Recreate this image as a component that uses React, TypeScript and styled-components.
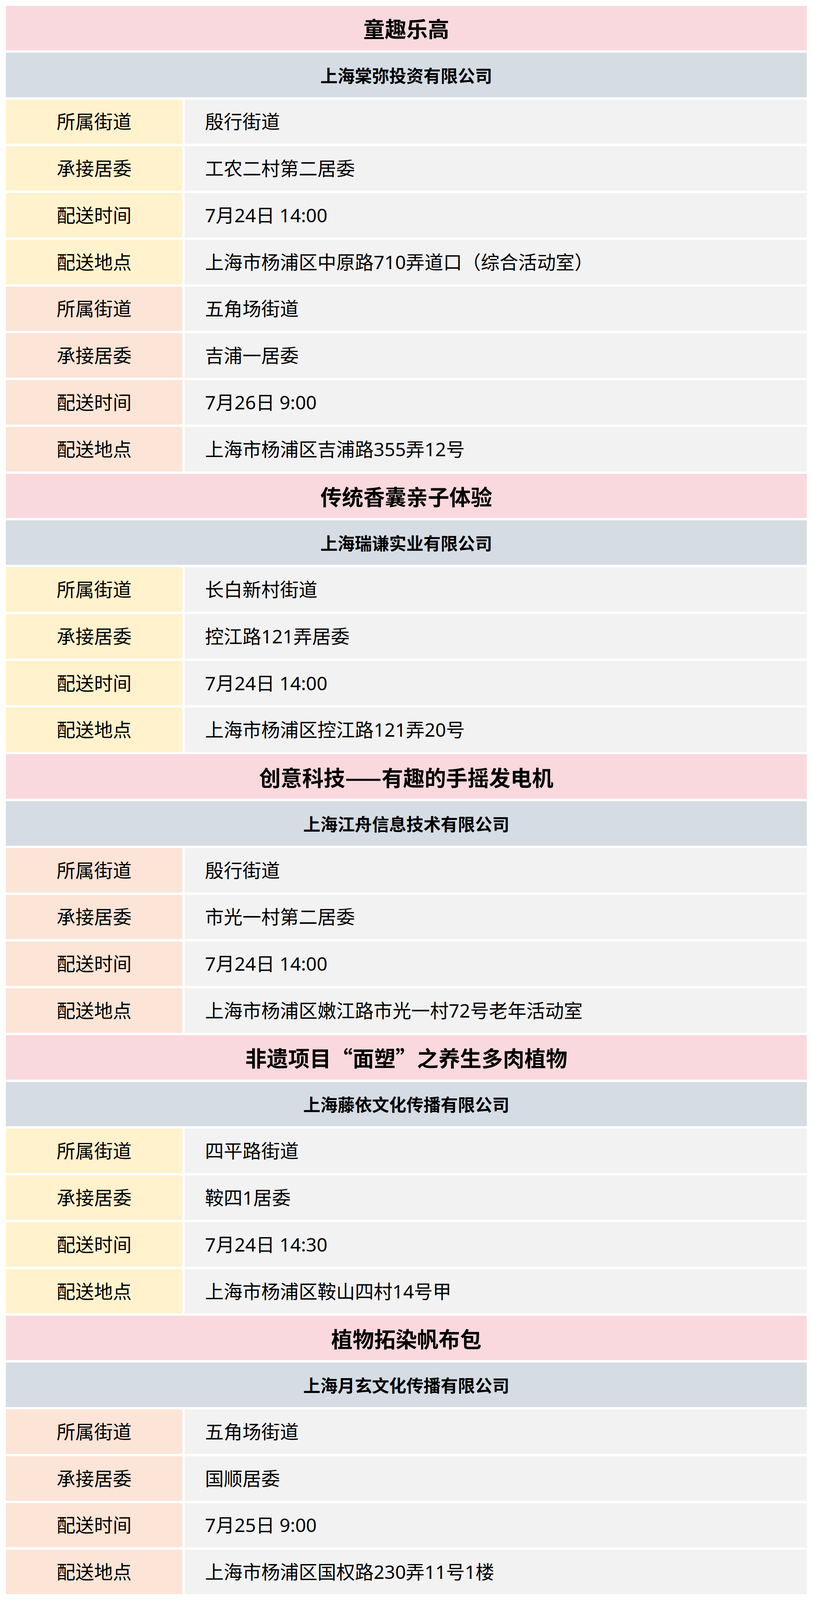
import React from "react";
import styled, { createGlobalStyle } from "styled-components";

const GlobalStyle = createGlobalStyle`
  html, body, #root {
    margin: 0;
    padding: 0;
    height: 100%;
    background: #ffffff;
  }
  body {
    font-family: "Noto Sans", "Noto Sans CJK SC", sans-serif;
    color: #000000;
    overflow: hidden;
  }
  *, *::before, *::after {
    box-sizing: border-box;
  }
`;

const Page = styled.div`
  display: flex;
  flex-direction: column;
  gap: 6px;
  height: 100vh;
  padding: 15px 16px 15px 15px;
  background: #ffffff;
`;

const Band = styled.div`
  flex: 1 1 0;
  min-height: 0;
  display: flex;
  align-items: center;
  justify-content: center;
  font-family: "Noto Sans CJK SC", "Noto Sans", sans-serif;
  font-weight: 700;
  line-height: 1;
  white-space: nowrap;
`;

const TitleBar = styled(Band)`
  background: #f9d9de;
  font-size: 55px;
`;

const CompanyBar = styled(Band)`
  background: #d5dce4;
  font-size: 44px;
`;

const Row = styled.div`
  flex: 1 1 0;
  min-height: 0;
  display: grid;
  grid-template-columns: 452px 1fr;
  column-gap: 6px;
`;

const Label = styled.div<{ $tone: "yellow" | "peach" }>`
  display: flex;
  align-items: center;
  justify-content: center;
  background: ${(p) => (p.$tone === "yellow" ? "#fff2cc" : "#fce4d6")};
  font-size: 48px;
  line-height: 1;
`;

const Value = styled.div`
  display: flex;
  align-items: center;
  padding-left: 52px;
  background: #f2f2f2;
  font-size: 48px;
  line-height: 1;
  white-space: nowrap;
`;

type Tone = "yellow" | "peach";
type Site = { street: string; committee: string; time: string; place: string; tone: Tone };
type Section = { title: string; company: string; sites: Site[] };

const sections: Section[] = [
  {
    title: "童趣乐高",
    company: "上海棠弥投资有限公司",
    sites: [
      {
        street: "殷行街道",
        committee: "工农二村第二居委",
        time: "7月24日 14:00",
        place: "上海市杨浦区中原路710弄道口（综合活动室）",
        tone: "yellow",
      },
      {
        street: "五角场街道",
        committee: "吉浦一居委",
        time: "7月26日 9:00",
        place: "上海市杨浦区吉浦路355弄12号",
        tone: "peach",
      },
    ],
  },
  {
    title: "传统香囊亲子体验",
    company: "上海瑞谦实业有限公司",
    sites: [
      {
        street: "长白新村街道",
        committee: "控江路121弄居委",
        time: "7月24日 14:00",
        place: "上海市杨浦区控江路121弄20号",
        tone: "yellow",
      },
    ],
  },
  {
    title: "创意科技——有趣的手摇发电机",
    company: "上海江舟信息技术有限公司",
    sites: [
      {
        street: "殷行街道",
        committee: "市光一村第二居委",
        time: "7月24日 14:00",
        place: "上海市杨浦区嫩江路市光一村72号老年活动室",
        tone: "peach",
      },
    ],
  },
  {
    title: "非遗项目“面塑”之养生多肉植物",
    company: "上海藤依文化传播有限公司",
    sites: [
      {
        street: "四平路街道",
        committee: "鞍四1居委",
        time: "7月24日 14:30",
        place: "上海市杨浦区鞍山四村14号甲",
        tone: "yellow",
      },
    ],
  },
  {
    title: "植物拓染帆布包",
    company: "上海月玄文化传播有限公司",
    sites: [
      {
        street: "五角场街道",
        committee: "国顺居委",
        time: "7月25日 9:00",
        place: "上海市杨浦区国权路230弄11号1楼",
        tone: "peach",
      },
    ],
  },
];

const InfoRow: React.FC<{ label: string; value: string; tone: Tone }> = ({ label, value, tone }) => (
  <Row>
    <Label $tone={tone}>{label}</Label>
    <Value>{value}</Value>
  </Row>
);

export default function App() {
  return (
    <>
      <GlobalStyle />
      <Page>
        {sections.map((s) => (
          <React.Fragment key={s.title}>
            <TitleBar>{s.title}</TitleBar>
            <CompanyBar>{s.company}</CompanyBar>
            {s.sites.map((site, i) => (
              <React.Fragment key={i}>
                <InfoRow label="所属街道" value={site.street} tone={site.tone} />
                <InfoRow label="承接居委" value={site.committee} tone={site.tone} />
                <InfoRow label="配送时间" value={site.time} tone={site.tone} />
                <InfoRow label="配送地点" value={site.place} tone={site.tone} />
              </React.Fragment>
            ))}
          </React.Fragment>
        ))}
      </Page>
    </>
  );
}
